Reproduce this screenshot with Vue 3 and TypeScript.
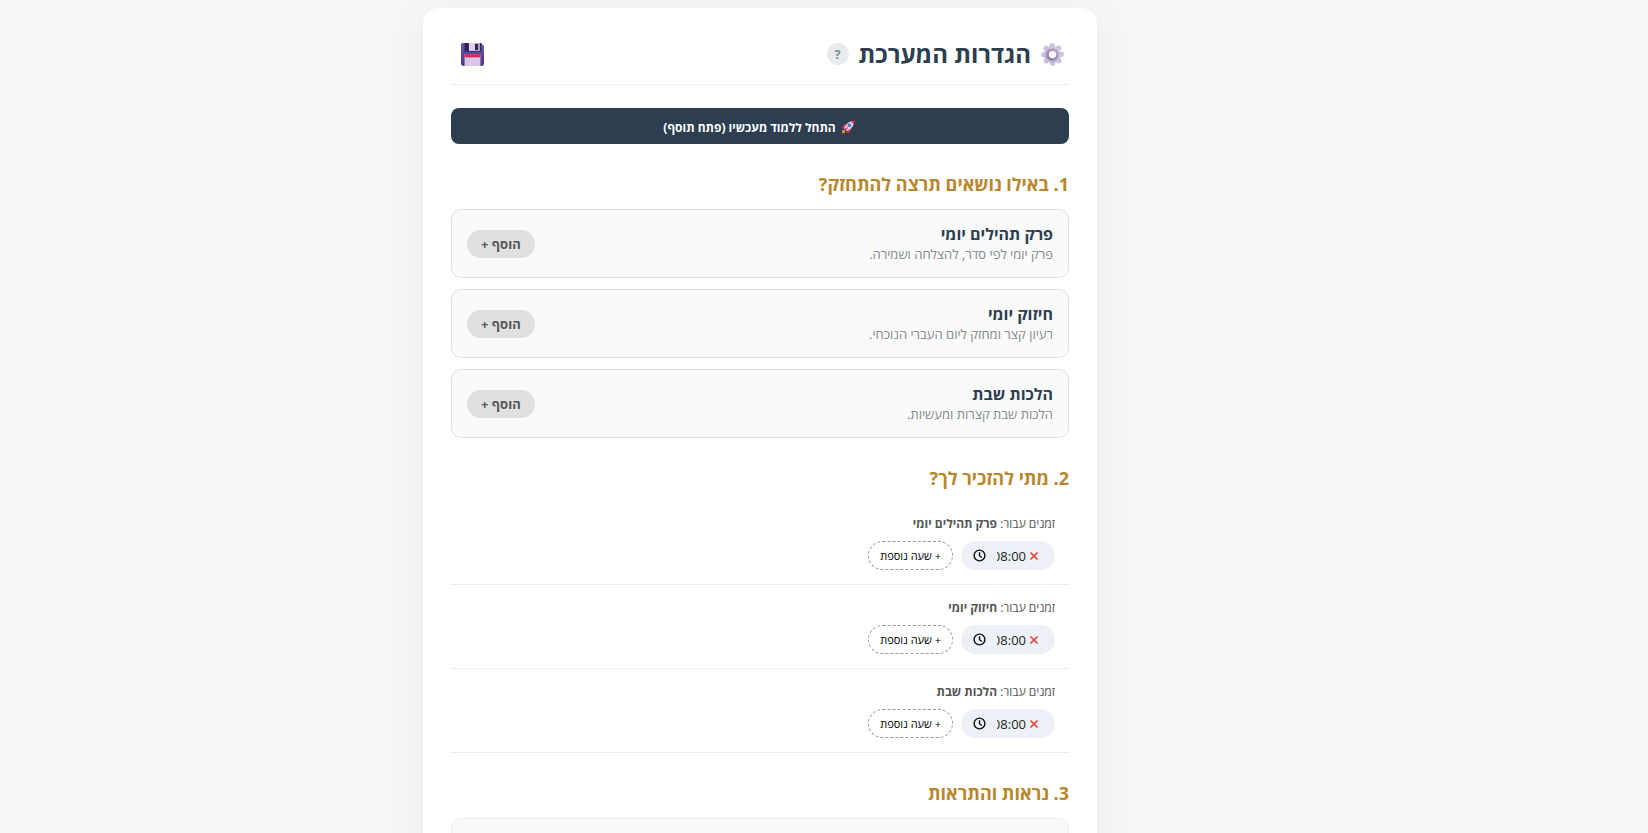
<script setup lang="ts">
import { ref } from 'vue'

interface Topic {
  id: string
  title: string
  description: string
  time: string
}

const topics = ref<Topic[]>([
  { id: 'tehillim', title: 'פרק תהילים יומי', description: 'פרק יומי לפי סדר, להצלחה ושמירה.', time: '08:00' },
  { id: 'chizuk', title: 'חיזוק יומי', description: 'רעיון קצר ומחזק ליום העברי הנוכחי.', time: '08:00' },
  { id: 'shabbat', title: 'הלכות שבת', description: 'הלכות שבת קצרות ומעשיות.', time: '08:00' },
])
</script>

<template>
  <div class="page" dir="rtl">
    <main class="panel">
      <header class="header">
        <svg class="emoji" viewBox="0 0 32 32" aria-hidden="true">
          <defs>
            <linearGradient id="gear" x1="1" y1="0" x2="0" y2="1">
              <stop offset="0" stop-color="#dbd3e8" />
              <stop offset="1" stop-color="#bba9d2" />
            </linearGradient>
            <linearGradient id="hub" x1="1" y1="0" x2="0" y2="1">
              <stop offset="0" stop-color="#b5a9c6" />
              <stop offset="1" stop-color="#9082a3" />
            </linearGradient>
          </defs>
          <g fill="url(#gear)">
            <rect v-for="n in 8" :key="n" x="12.2" y="0" width="7.6" height="9" rx="3" :transform="`rotate(${(n - 1) * 45} 16 16)`" />
            <path fill-rule="evenodd" d="M16 4.500a11.500 11.500 0 1 0 0 23a11.500 11.500 0 0 0 0-23zM16 11a5 5 0 1 1 0 10a5 5 0 0 1 0-10z" />
          </g>
          <circle cx="16" cy="16" r="7" fill="none" stroke="url(#hub)" stroke-width="3.600" />
        </svg>
        <h1 class="title">הגדרות המערכת</h1>
        <button class="help" type="button" aria-label="עזרה">?</button>
        <button class="save" type="button" aria-label="שמירה">
          <svg class="emoji" viewBox="0 0 32 32" aria-hidden="true">
            <defs>
              <linearGradient id="disk" x1="0" y1="0" x2="0" y2="1">
                <stop offset="0" stop-color="#5a5cad" />
                <stop offset="1" stop-color="#57357f" />
              </linearGradient>
            </defs>
            <path d="M2 0h26l4 4v25a3 3 0 0 1-3 3H3a3 3 0 0 1-3-3V2a2 2 0 0 1 2-2z" fill="url(#disk)" />
            <path d="M5 0h23v12H5z" fill="#32204f" />
            <path d="M11 0h15v11H11z" fill="#ddd2e9" />
            <path d="M19.500 1h4.500v9h-4.500z" fill="#3a2052" />
            <path d="M5 15.500h22V32H5z" fill="#d8c8e6" />
            <path d="M5 15.500h22v4.500H5z" fill="#d8285c" />
          </svg>
        </button>
      </header>

      <button class="start" type="button">
        <svg class="rocket" viewBox="0 0 32 32" aria-hidden="true">
          <path d="M13 8 5 12l-3 7 7-1zM24 19l-4 9-7 3 1-8z" fill="#e3295e" />
          <path d="M3 22l6 1 1 6-8 2z" fill="#ff8a2b" />
          <path d="M7 19C11 9 18 2 30 2c0 12-7 19-17 23z" fill="#ddd5e9" />
          <path d="M22 3q4-2 9-2q0 5-2 9z" fill="#f03467" />
          <circle cx="19" cy="12" r="4" fill="#4b579f" />
          <circle cx="19" cy="12" r="2" fill="#62b4e8" />
          <path d="M8 24l7-7" stroke="#d4265b" stroke-width="3" />
        </svg>
        <span>התחל ללמוד מעכשיו (פתח תוסף)</span>
      </button>

      <section class="section">
        <h2 class="heading">1. באילו נושאים תרצה להתחזק?</h2>
        <ul class="topics">
          <li v-for="topic in topics" :key="topic.id" class="topic">
            <div>
              <h3 class="topic-title">{{ topic.title }}</h3>
              <p class="topic-text">{{ topic.description }}</p>
            </div>
            <button class="add" type="button">הוסף +</button>
          </li>
        </ul>
      </section>

      <section class="section">
        <h2 class="heading compact">2. מתי להזכיר לך?</h2>
        <div v-for="topic in topics" :key="topic.id" class="schedule">
          <label class="schedule-label" :for="`time-${topic.id}`">זמנים עבור: <strong>{{ topic.title }}</strong></label>
          <div class="times">
            <div class="chip">
              <button class="remove" type="button" aria-label="הסרה">
                <svg viewBox="0 0 8 8" aria-hidden="true"><path d="M.5.5l7 7M7.500.5L.5 7.500" /></svg>
              </button>
              <input :id="`time-${topic.id}`" v-model="topic.time" class="time" type="text" />
              <svg class="clock" viewBox="0 0 12 12" aria-hidden="true">
                <circle cx="6" cy="6" r="5" />
                <path d="M6 3v3.200l2.200 1.600" />
              </svg>
            </div>
            <button class="more" type="button">+ שעה נוספת</button>
          </div>
        </div>
      </section>

      <section class="section">
        <h2 class="heading">3. נראות והתראות</h2>
        <div class="options"></div>
      </section>
    </main>
  </div>
</template>

<style>
body {
  background: #f4f6f8;
}
</style>

<style scoped>
.page {
  box-sizing: border-box;
  height: 100vh;
  overflow: hidden;
  padding: 8px 128px 0 0;
  background: #f4f6f8;
  color: #2c3e50;
  font-family: "Open Sans", "Noto Sans", "DejaVu Sans", sans-serif;
}

button,
input {
  font-family: inherit;
  border: 0;
  padding: 0;
}

.panel {
  box-sizing: border-box;
  max-width: 674px;
  margin: 0 auto;
  padding: 28px;
  border-radius: 16px;
  background: #fff;
  box-shadow: 0 10px 40px rgba(0, 0, 0, 0.05);
}

.header {
  display: flex;
  align-items: center;
  gap: 10px;
  height: 36px;
  padding: 0 5px 12px 10px;
  margin-bottom: 23px;
  border-bottom: 1px solid #eee;
}

.emoji {
  display: block;
  width: 23px;
  height: 23px;
}

.title {
  margin: 0;
  font-size: 24px;
  line-height: 32px;
  font-weight: 700;
}

.help {
  width: 22px;
  height: 22px;
  border-radius: 50%;
  background: #e8ecef;
  color: #7f8c8d;
  font-size: 13px;
  font-weight: 700;
}

.save {
  margin-right: auto;
  background: none;
}

.start {
  display: flex;
  align-items: center;
  justify-content: center;
  gap: 5px;
  width: 100%;
  height: 36px;
  padding: 2px 4px 0 2px;
  border-radius: 8px;
  background: #2c3e50;
  color: #fff;
  font-size: 12px;
  font-weight: 700;
}

.rocket {
  width: 14px;
  height: 14px;
}

.section {
  margin-top: 28px;
}

.heading {
  margin: 0 0 12px;
  color: #b8862b;
  font-size: 18px;
  line-height: 25px;
  font-weight: 700;
}

.heading.compact {
  margin-bottom: 10px;
}

.topics {
  display: grid;
  gap: 11px;
  margin: 0;
  padding: 0;
  list-style: none;
}

.topic {
  box-sizing: border-box;
  display: flex;
  align-items: center;
  justify-content: space-between;
  padding: 14px 15px;
  border: 1px solid #e0e0e0;
  border-radius: 10px;
  background: #fafafa;
}

.topic-title {
  margin: 0;
  font-size: 16px;
  line-height: 21px;
}

.topic-text {
  margin: 0;
  color: #7f8c8d;
  font-size: 13px;
  line-height: 18px;
}

.add {
  height: 28px;
  padding: 0 14px;
  border-radius: 14px;
  background: #e0e0e0;
  color: #555;
  font-size: 13px;
  font-weight: 700;
}

.schedule {
  padding: 14px;
  border-bottom: 1px solid #eee;
}

.schedule-label {
  display: block;
  margin-bottom: 8px;
  color: #555;
  font-size: 12px;
  line-height: 18px;
}

.times {
  display: flex;
  gap: 8px;
}

.chip {
  box-sizing: border-box;
  display: flex;
  align-items: center;
  width: 94px;
  height: 29px;
  padding: 0 17px 0 12px;
  border-radius: 15px;
  background: #edf1f7;
}

.remove {
  width: 8px;
  height: 8px;
  background: none;
}

.remove svg {
  display: block;
  fill: none;
  stroke: #e74c3c;
  stroke-width: 1.6;
}

.time {
  width: 29px;
  margin-right: 4px;
  background: none;
  color: #222;
  font-size: 13px;
  line-height: 18px;
}

.clock {
  width: 13px;
  height: 13px;
  margin-right: auto;
  fill: none;
  stroke: #111;
  stroke-width: 1.3;
}

.more {
  height: 29px;
  padding: 0 11px;
  border: 1px dashed #999;
  border-radius: 15px;
  background: #fff;
  color: #000;
  font-size: 11px;
}

.options {
  height: 120px;
  border: 1px solid #e8ecef;
  border-radius: 10px;
  background: #f8f9fb;
}
</style>
